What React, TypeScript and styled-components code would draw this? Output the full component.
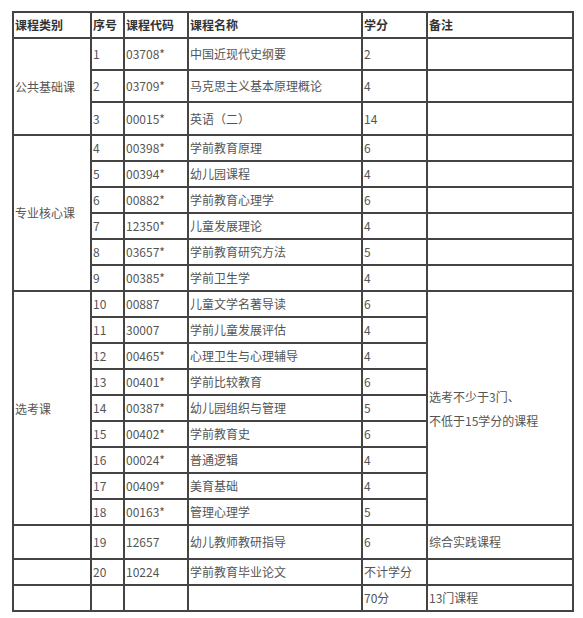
import React from 'react';
import styled, { createGlobalStyle } from 'styled-components';

const GlobalStyle = createGlobalStyle`
    body {
        margin: 0;
        background: #fff;
        font-family: "Noto Sans CJK SC", "Noto Sans", sans-serif;
    }
`;

const Page = styled.div`
    padding: 11px 0 0 12px;
`;

const Table = styled.div`
    display: inline-grid;
    grid-template-columns: 76px 31px 62px 172px 63px 144px;
    grid-template-rows: 24px 30px 30px 31px repeat(15, 24px) 32px 24px 24px;
    gap: 2px;
    padding: 2px;
    background: #444;
`;

const Cell = styled.div<{ $span?: number; $head?: boolean; $shift?: number }>`
    grid-row: span ${p => p.$span ?? 1};
    background: #fff;
    display: flex;
    align-items: center;
    padding: ${p => p.$shift ?? 0}px 1px 0 1px;
    font-size: 12px;
    line-height: 24px;
    white-space: nowrap;
    color: ${p => (p.$head ? '#333' : '#555')};
    font-weight: ${p => (p.$head ? 700 : 400)};
`;

const Note = styled.div`
    line-height: 24px;
`;

type Course = [string, string, string, string];

const groups: { name: string; rows: Course[]; shift?: number; note?: string[] }[] = [
    {
        name: '公共基础课',
        rows: [
            ['1', '03708*', '中国近现代史纲要', '2'],
            ['2', '03709*', '马克思主义基本原理概论', '4'],
            ['3', '00015*', '英语（二）', '14'],
        ],
    },
    {
        name: '专业核心课',
        rows: [
            ['4', '00398*', '学前教育原理', '6'],
            ['5', '00394*', '幼儿园课程', '4'],
            ['6', '00882*', '学前教育心理学', '6'],
            ['7', '12350*', '儿童发展理论', '4'],
            ['8', '03657*', '学前教育研究方法', '5'],
            ['9', '00385*', '学前卫生学', '4'],
        ],
    },
    {
        name: '选考课',
        shift: 2,
        note: ['选考不少于3门、', '不低于15学分的课程'],
        rows: [
            ['10', '00887', '儿童文学名著导读', '6'],
            ['11', '30007', '学前儿童发展评估', '4'],
            ['12', '00465*', '心理卫生与心理辅导', '4'],
            ['13', '00401*', '学前比较教育', '6'],
            ['14', '00387*', '幼儿园组织与管理', '5'],
            ['15', '00402*', '学前教育史', '6'],
            ['16', '00024*', '普通逻辑', '4'],
            ['17', '00409*', '美育基础', '4'],
            ['18', '00163*', '管理心理学', '5'],
        ],
    },
];

const tail: string[][] = [
    ['', '19', '12657', '幼儿教师教研指导', '6', '综合实践课程'],
    ['', '20', '10224', '学前教育毕业论文', '不计学分', ''],
    ['', '', '', '', '70分', '13门课程'],
];

export default function App() {
    return (
        <Page>
            <GlobalStyle />
            <Table>
                {['课程类别', '序号', '课程代码', '课程名称', '学分', '备注'].map(h => (
                    <Cell key={h} $head>{h}</Cell>
                ))}
                {groups.map(g =>
                    g.rows.map((r, i) => (
                        <React.Fragment key={r[0]}>
                            {i === 0 && <Cell $span={g.rows.length} $shift={g.shift}>{g.name}</Cell>}
                            {r.map((v, j) => <Cell key={j}>{v}</Cell>)}
                            {g.note
                                ? i === 0 && (
                                    <Cell $span={g.rows.length} $shift={g.shift}>
                                        <Note>{g.note.map(n => <div key={n}>{n}</div>)}</Note>
                                    </Cell>
                                )
                                : <Cell />}
                        </React.Fragment>
                    ))
                )}
                {tail.map((r, i) => r.map((v, j) => <Cell key={`t${i}-${j}`}>{v}</Cell>))}
            </Table>
        </Page>
    );
}
